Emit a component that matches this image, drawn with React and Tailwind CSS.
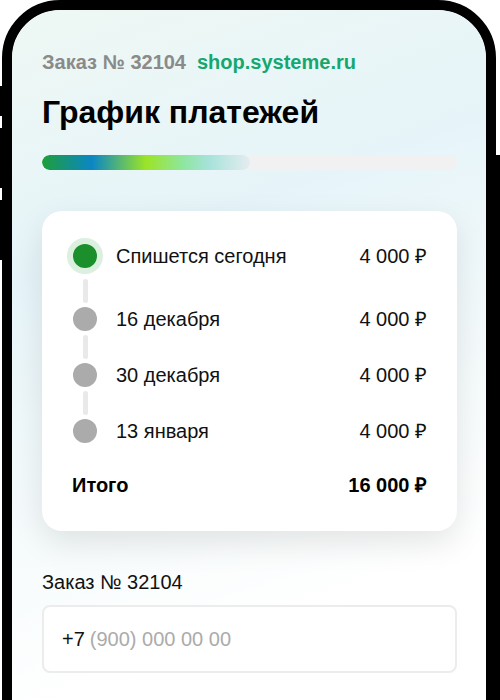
export default function App() {
  const rows = [
    { label: "Спишется сегодня", amount: "4 000 ₽", active: true },
    { label: "16 декабря", amount: "4 000 ₽" },
    { label: "30 декабря", amount: "4 000 ₽" },
    { label: "13 января", amount: "4 000 ₽" },
  ];
  return (
    <div className="relative w-[500px] h-[700px] overflow-hidden bg-white font-['Liberation_Sans',Arial,sans-serif]">
      {/* side buttons */}
      <div className="absolute left-0 top-[86px] w-[3px] h-[30px] bg-black" />
      <div className="absolute left-0 top-[128px] w-[3px] h-[60px] bg-black" />
      <div className="absolute left-0 top-[200px] w-[3px] h-[60px] bg-black" />
      <div className="absolute right-0 top-[155px] w-[6px] h-[560px] bg-black" />
      <div className="ml-[2px] w-[494px] h-[760px] rounded-[58px] border-[10px] border-black overflow-hidden">
        <div className="h-full rounded-[48px] bg-[linear-gradient(160deg,#eef8f4_0%,#e6f4f9_30%,#f4fafb_55%,#ffffff_78%)] pl-[30px] pr-[29px] pt-[40px]">
          <div className="flex items-baseline gap-[11px] text-[20px] font-bold leading-[24px]">
            <span className="text-[#8a8a8a]">Заказ № 32104</span>
            <span className="text-[#14a870]">shop.systeme.ru</span>
          </div>
          <h1 className="mt-[18px] text-[32px] font-bold leading-[40px] text-black">График платежей</h1>
          <div className="mt-[23px] h-[15px] rounded-full bg-[#f1f1f1] overflow-hidden">
            <div className="h-full w-[50%] rounded-full bg-[linear-gradient(90deg,#1f9e3a_0%,#0b86c6_24%,#9be426_50%,#8fe6a0_68%,#a6e2da_80%,#e6ecf0_100%)]" />
          </div>
          <div className="mt-[41px] rounded-[20px] bg-white pl-[25px] pr-[30px] pt-[27px] pb-[34px] shadow-[0_12px_32px_rgba(0,0,0,0.10)]">
            {rows.map((r, i) => (
              <div key={i}>
                {i > 0 && (
                  <div className={`flex w-[36px] justify-center ${i === 1 ? "pt-[5px] pb-[4px]" : "py-[4px]"}`}>
                    <div className="w-[5px] h-[24px] rounded-full bg-[#e9e9e9]" />
                  </div>
                )}
                <div className={`flex items-center ${r.active ? "h-[36px]" : "h-[24px]"}`}>
                  <div className="flex w-[36px] items-center justify-center">
                    {r.active ? (
                      <div className="w-[36px] h-[36px] rounded-full bg-[#dcf0df] flex items-center justify-center">
                        <div className="w-[24px] h-[24px] rounded-full bg-[#1a8f2c]" />
                      </div>
                    ) : (
                      <div className="w-[24px] h-[24px] rounded-full bg-[#ababab]" />
                    )}
                  </div>
                  <span className="ml-[13px] flex-1 text-[20px] leading-[24px] text-[#111]">{r.label}</span>
                  <span className="text-[20px] leading-[24px] text-[#111]">{r.amount}</span>
                </div>
              </div>
            ))}
            <div className="mt-[30px] flex items-center pl-[5px] text-[20px] font-bold leading-[24px] text-black">
              <span className="flex-1">Итого</span>
              <span>16 000 ₽</span>
            </div>
          </div>
          <div className="mt-[39px] text-[20px] leading-[24px] text-[#111]">Заказ № 32104</div>
          <div className="mt-[11px] h-[68px] rounded-[8px] border-2 border-[#ececec] bg-white flex items-center pl-[18px] text-[20px]">
            <span className="text-[#111]">+7</span>
            <span className="ml-[5px] text-[#ababab]">(900) 000 00 00</span>
          </div>
        </div>
      </div>
    </div>
  );
}
